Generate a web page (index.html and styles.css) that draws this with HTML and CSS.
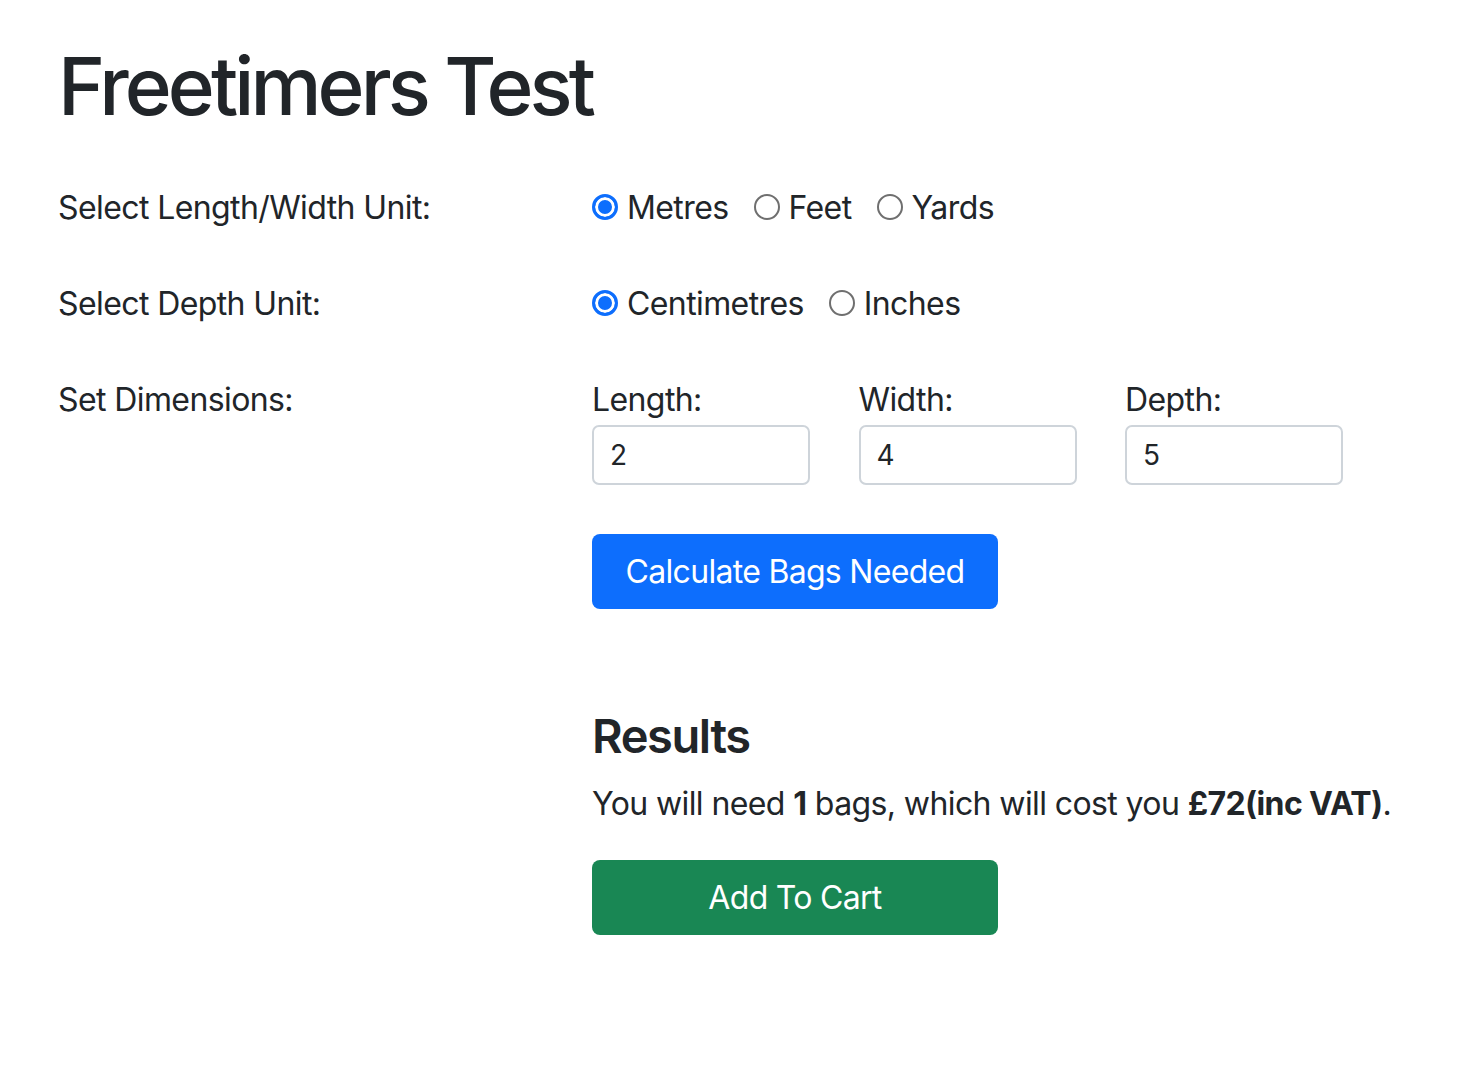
FILE: index.html
```html
<!DOCTYPE html>
<html lang="en">
<head>
<meta charset="utf-8">
<title>Freetimers Test</title>
<link rel="stylesheet" href="styles.css">
</head>
<body>
<main class="page">
  <h1 class="title">Freetimers Test</h1>

  <div class="form-row">
    <div class="row-label">Select Length/Width Unit:</div>
    <div class="field radios">
      <label class="radio"><input type="radio" name="lw" checked><span>Metres</span></label>
      <label class="radio"><input type="radio" name="lw"><span>Feet</span></label>
      <label class="radio"><input type="radio" name="lw"><span>Yards</span></label>
    </div>
  </div>

  <div class="form-row">
    <div class="row-label">Select Depth Unit:</div>
    <div class="field radios">
      <label class="radio"><input type="radio" name="d" checked><span>Centimetres</span></label>
      <label class="radio"><input type="radio" name="d"><span>Inches</span></label>
    </div>
  </div>

  <div class="form-row form-row-last">
    <div class="row-label">Set Dimensions:</div>
    <div class="field">
      <div class="dims">
        <label class="dim"><span class="dim-label">Length:</span><input class="dim-input" type="text" value="2"></label>
        <label class="dim"><span class="dim-label">Width:</span><input class="dim-input" type="text" value="4"></label>
        <label class="dim"><span class="dim-label">Depth:</span><input class="dim-input" type="text" value="5"></label>
      </div>
      <button class="btn btn-primary" type="button">Calculate Bags Needed</button>

      <section class="results">
        <h4 class="results-title">Results</h4>
        <p class="results-text">You will need <strong>1</strong> bags, which will cost you <strong>£72(inc VAT)</strong>.</p>
        <button class="btn btn-success" type="button">Add To Cart</button>
      </section>
    </div>
  </div>
</main>
</body>
</html>
```
FILE: styles.css
```css
* { box-sizing: border-box; }
html, body { margin: 0; padding: 0; background: #fff; }
body {
  font-family: Inter, "Noto Sans", "Liberation Sans", sans-serif;
  font-size: 32px;
  line-height: 48px;
  letter-spacing: -0.6px;
  color: #212529;
}
.page {
  padding: 38px 0 0 58px;
}
.title {
  margin: 0 0 50px 0;
  font-size: 80px;
  line-height: 96px;
  font-weight: 500;
  letter-spacing: -3.9px;
}
.form-row {
  display: grid;
  grid-template-columns: 534px 1fr;
  margin-bottom: 48px;
}
.form-row-last { margin-bottom: 0; }
.row-label { line-height: 48px; }
.radios {
  display: flex;
  align-items: center;
  height: 48px;
  gap: 25px;
}
.radio {
  display: flex;
  align-items: center;
  gap: 9px;
}
.radio input {
  appearance: none;
  -webkit-appearance: none;
  margin: 0;
  width: 26px;
  height: 26px;
  border-radius: 50%;
  border: 2px solid #6f6f6f;
  background: #fff;
  position: relative;
  top: -1px;
}
.radio input:checked {
  border: 3px solid #0d6efd;
  background: #0d6efd;
  box-shadow: inset 0 0 0 3px #fff;
}
.dims {
  display: grid;
  grid-template-columns: repeat(3, 218px);
  column-gap: 48.5px;
  margin-bottom: 49px;
}
.dim {
  display: flex;
  flex-direction: column;
}
.dim-label { line-height: 48px; margin-bottom: 1px; }
.dim-input {
  width: 218px;
  height: 60px;
  border: 2px solid #ced4da;
  border-radius: 7px;
  padding: 0 16px;
  font-family: inherit;
  font-size: 28px;
  letter-spacing: -0.4px;
  color: #212529;
  background: #fff;
}
.btn {
  display: block;
  width: 406px;
  height: 75px;
  border: 0;
  border-radius: 8px;
  color: #fff;
  font-family: inherit;
  font-size: 32px;
  line-height: 48px;
  letter-spacing: -0.7px;
  text-align: center;
  padding: 0;
}
.btn-primary { background: #0d6efd; }
.btn-success { background: #198754; }
.results { margin-top: 98px; }
.results-title {
  margin: 0 0 16px 0;
  font-size: 47px;
  line-height: 57px;
  font-weight: 600;
  letter-spacing: -1.4px;
}
.results-text { margin: 0 0 32px 0; }
.results-text strong { font-weight: 700; }
```
